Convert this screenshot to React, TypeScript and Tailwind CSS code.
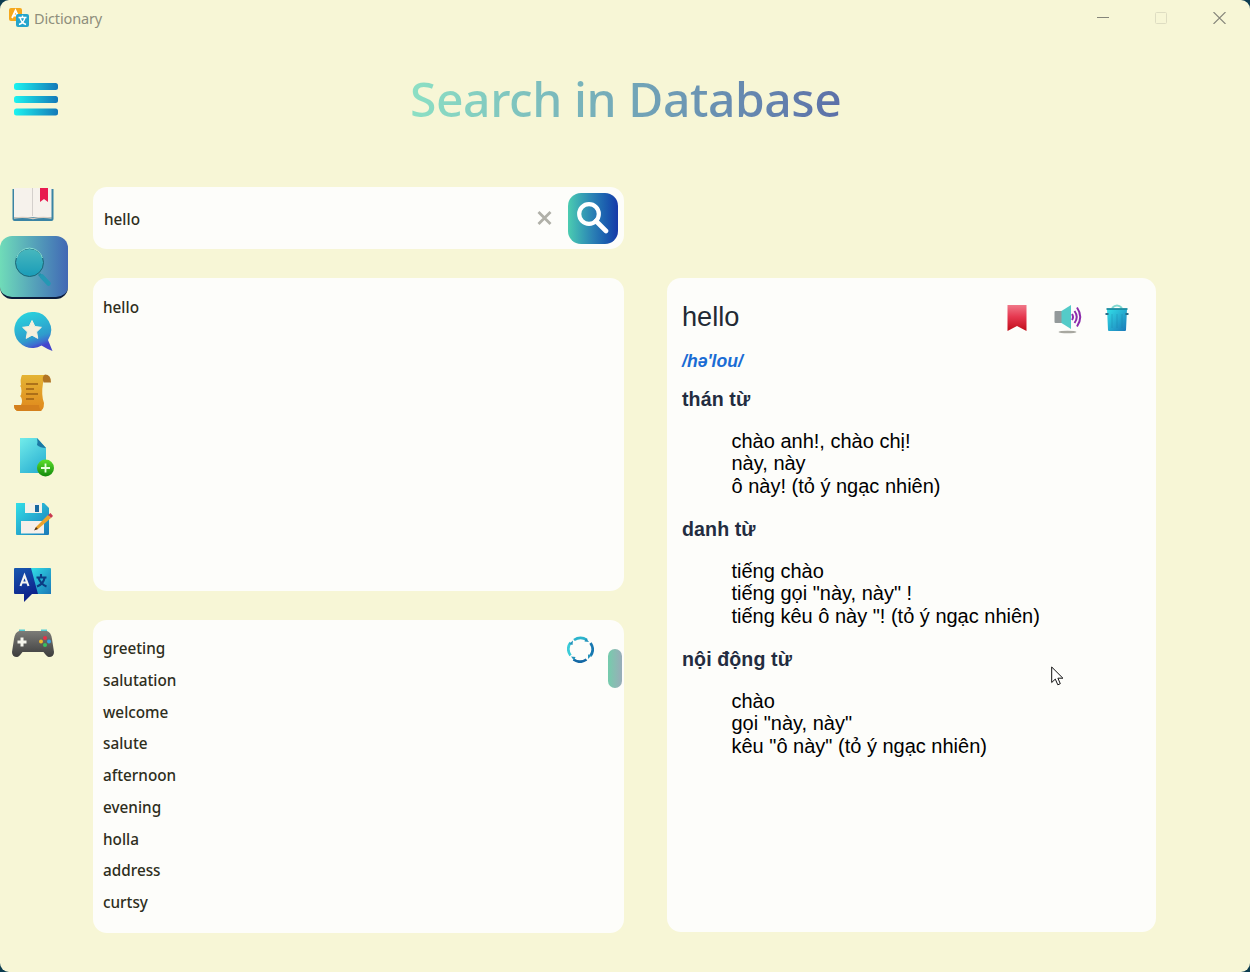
import React from "react";

type Part = { title: string; lines: string[] };

const synonyms = ["greeting", "salutation", "welcome", "salute", "afternoon", "evening", "holla", "address", "curtsy"];

const parts: Part[] = [
  { title: "thán từ", lines: ["chào anh!, chào chị!", "này, này", "ô này! (tỏ ý ngạc nhiên)"] },
  { title: "danh từ", lines: ["tiếng chào", 'tiếng gọi "này, này" !', 'tiếng kêu ô này "! (tỏ ý ngạc nhiên)'] },
  { title: "nội động từ", lines: ["chào", 'gọi "này, này"', 'kêu "ô này" (tỏ ý ngạc nhiên)'] },
];

function Gradients() {
  return (
    <svg width="0" height="0" className="absolute">
      <defs>
        <linearGradient id="cyanBlue" x1="0" y1="0" x2="1" y2="1">
          <stop offset="0" stopColor="#32e0e8" />
          <stop offset="1" stopColor="#1a78b8" />
        </linearGradient>
        <linearGradient id="paleCyan" x1="0" y1="0" x2="0.6" y2="1">
          <stop offset="0" stopColor="#72ecea" />
          <stop offset="1" stopColor="#2fb4d4" />
        </linearGradient>
        <linearGradient id="lens" x1="0" y1="0" x2="0" y2="1">
          <stop offset="0" stopColor="#48b8be" />
          <stop offset="1" stopColor="#1a9cb8" />
        </linearGradient>
        <linearGradient id="bubble" x1="0" y1="0" x2="0.35" y2="1">
          <stop offset="0" stopColor="#28dce0" />
          <stop offset="0.75" stopColor="#2f9ccc" />
          <stop offset="0.9" stopColor="#3c70d0" />
          <stop offset="1" stopColor="#4444cc" />
        </linearGradient>
        <linearGradient id="gold" x1="0" y1="0" x2="0" y2="1">
          <stop offset="0" stopColor="#e4b434" />
          <stop offset="1" stopColor="#e0881c" />
        </linearGradient>
        <linearGradient id="green" x1="0" y1="0" x2="0" y2="1">
          <stop offset="0" stopColor="#5ce02c" />
          <stop offset="1" stopColor="#12880c" />
        </linearGradient>
        <linearGradient id="navy" x1="0" y1="0" x2="0.3" y2="1">
          <stop offset="0" stopColor="#1858b0" />
          <stop offset="1" stopColor="#0c1e88" />
        </linearGradient>
        <linearGradient id="pad" x1="0" y1="0" x2="0" y2="1">
          <stop offset="0" stopColor="#7c7c78" />
          <stop offset="1" stopColor="#3c3c3c" />
        </linearGradient>
        <linearGradient id="red" x1="0" y1="0" x2="0" y2="1">
          <stop offset="0" stopColor="#f07888" />
          <stop offset="0.45" stopColor="#e63850" />
          <stop offset="1" stopColor="#c00c18" />
        </linearGradient>
        <linearGradient id="bars" x1="0" y1="0" x2="1" y2="0">
          <stop offset="0" stopColor="#1cf4f0" />
          <stop offset="1" stopColor="#1478b8" />
        </linearGradient>
      </defs>
    </svg>
  );
}

function AppLogo() {
  return (
    <svg width="20" height="20" viewBox="0 0 20 20">
      <rect x="0" y="0" width="13" height="13" rx="2" fill="#f5a81c" />
      <path d="M3 10 6.5 2.5 10 10M4.500 7.500h4" fill="none" stroke="#fff" strokeWidth="1.800" />
      <rect x="7" y="6" width="13" height="13" rx="2" fill="#25a5cc" />
      <path d="M9.500 9.500h8M13.500 7.500v2M16 9.500c-1 4-3 6-6 7M11 9.500c1 4 3 6 6 7" fill="none" stroke="#fff" strokeWidth="1.400" />
    </svg>
  );
}

function MenuIcon() {
  return (
    <svg width="44" height="34" viewBox="0 0 44 34">
      <rect y="1" width="44" height="7" rx="2.500" fill="url(#bars)" />
      <rect y="14" width="44" height="7" rx="2.500" fill="url(#bars)" />
      <rect y="26.500" width="44" height="7" rx="2.500" fill="url(#bars)" />
    </svg>
  );
}

function BookIcon() {
  return (
    <svg width="42" height="33" viewBox="0 0 42 33">
      <path d="M.500 1h41v30q0 2-2 2h-37q-2 0-2-2z" fill="#3a84a4" />
      <path d="M2 0h19v29H2zM21 0h18.500v29H21z" fill="#f6f2ec" />
      <path d="M2 30q10-1.500 19 .5 9-2 18.500-.5" fill="none" stroke="#d8ccc0" strokeWidth="1.400" />
      <path d="M20.500 0v28" stroke="#d4d0cc" strokeWidth="1" />
      <path d="M28 0h8v14l-4-3-4 3z" fill="#e81c50" />
    </svg>
  );
}

function SearchIcon() {
  return (
    <svg width="38" height="40" viewBox="0 0 38 40">
      <path d="M25 27l3 3" stroke="#2090a8" strokeWidth="3" />
      <path d="M28 29.500l6.500 7" stroke="#2498b4" strokeWidth="4.500" strokeLinecap="round" />
      <circle cx="15.500" cy="15.500" r="14" fill="url(#lens)" stroke="#1c6474" strokeWidth="1" />
      <path d="M2.500 11a13.500 13.500 0 0 1 26 0" fill="none" stroke="#8ce4d8" strokeWidth="1" />
    </svg>
  );
}

function StarIcon() {
  return (
    <svg width="39" height="39" viewBox="0 0 39 39">
      <path d="M18 0a18 18 0 1 0 9.500 33.500Q33 37 38.500 39q-2-5-4.500-11A18 18 0 0 0 18 0z" fill="url(#bubble)" />
      <path d="M18 8.500l2.900 6 6.500.8-4.800 4.600 1.200 6.500-5.800-3.200-5.800 3.200 1.200-6.500-4.800-4.600 6.500-.8z" fill="#f6f0dc" stroke="#f6f0dc" strokeWidth="1" strokeLinejoin="round" />
    </svg>
  );
}

function ScrollIcon() {
  return (
    <svg width="38" height="38" viewBox="0 0 38 38">
      <path d="M8 1h24q-3 2-3 8-2 12 1 20 0 8-5 8H5q-5 0-5-6h7q2-4 0-8l-1-1 1-1q1-4 0-8l-1-1 1-1q-1-6 1-10z" fill="url(#gold)" />
      <path d="M31 .5q6 0 6 8h-7.500q-2-6 1.500-8z" fill="#b07424" />
      <path d="M0 31h25q0 4 3 6H5q-5 0-5-6z" fill="#d4801c" />
      <path d="M12 10h12M12 15h8M12 20h12M12 25h8" stroke="#9c6014" strokeWidth="1.700" />
    </svg>
  );
}

function AddFileIcon() {
  return (
    <svg width="36" height="40" viewBox="0 0 36 40">
      <path d="M1 1h17l9 10v25H1z" fill="url(#paleCyan)" />
      <path d="M18 1l9 10q-6 0-9-3 1-3 0-7z" fill="#1c78a4" />
      <circle cx="26.500" cy="31" r="8.500" fill="url(#green)" />
      <path d="M26.500 26.500v9M22 31h9" stroke="#e8ffe0" strokeWidth="1.800" />
    </svg>
  );
}

function SaveIcon() {
  return (
    <svg width="38" height="34" viewBox="0 0 38 34">
      <path d="M1 1h28l5 5v26q0 1-1 1H2q-1 0-1-1z" fill="url(#cyanBlue)" />
      <path d="M10 1h17v10H10z" fill="#f2f2ea" />
      <path d="M20 3h4v7h-4z" fill="#1868a0" />
      <path d="M6 19h23v12.500H6z" fill="#f6f0ea" />
      <path d="M33 13l3 3-13 11-3 1 1-3z" fill="#eca32c" />
      <path d="M21 25l-2 3.500 4-1.500z" fill="#54300e" />
      <path d="M33 13l2.500-2 2.500 3-2 2z" fill="#c83850" />
    </svg>
  );
}

function TranslateIcon() {
  return (
    <svg width="38" height="36" viewBox="0 0 38 36">
      <path d="M16 1h20q1 0 1 1v25H21z" fill="url(#cyanBlue)" />
      <path d="M1 1h16l7 26h-6l-8 8v-8H1q-1 0-1-1V2q0-1 1-1z" fill="url(#navy)" />
      <path d="M6.500 19l4-10.500 4 10.500M8 15.500h5" fill="none" stroke="#f4f4f0" strokeWidth="2.100" />
      <path d="M22.500 10.500h10M27 7v3.500M30.500 11q-1 6-7.500 8.500M24.500 11q2 6 8 8.500" fill="none" stroke="#0c3c84" strokeWidth="2.100" />
    </svg>
  );
}

function GameIcon() {
  return (
    <svg width="42" height="30" viewBox="0 0 42 30">
      <path d="M7 .500h6v3H7zM29 .500h6v3h-6z" fill="#55ccd4" />
      <path d="M7 2h28q4 1 5 8l2 13q0 5-5 5-2 0-5.500-5h-21Q7 28 5 28q-5 0-5-5l2-13q1-7 5-8z" fill="url(#pad)" />
      <path d="M10 8.500v9M5.500 13h9" stroke="#f4f4ec" strokeWidth="3" />
      <circle cx="33" cy="9" r="2" fill="#e83048" />
      <circle cx="29" cy="12.500" r="2" fill="#f0b82c" />
      <circle cx="37" cy="12.500" r="2" fill="#38a0e0" />
      <circle cx="33" cy="16" r="2" fill="#38c060" />
    </svg>
  );
}

function TitleBar() {
  return (
    <header className="flex h-9 shrink-0 items-center justify-between pr-6 pl-[9px]">
      <div className="flex items-center gap-[5px]">
        <AppLogo />
        <span className="pt-px font-['Noto_Sans','Open_Sans',sans-serif] text-[14.500px] tracking-[-0.15px] text-[#8e8e7c]">
          Dictionary
        </span>
      </div>
      <div className="flex items-center gap-[46px]">
        <svg width="12" height="12"><path d="M0 5.500h12" stroke="#85857a" /></svg>
        <svg width="12" height="12"><rect x="0.500" y="0.500" width="11" height="11" rx="1" fill="none" stroke="#deddc2" /></svg>
        <svg width="13" height="12"><path d="M.500 0l12 12M12.500 0l-12 12" stroke="#85857a" strokeWidth="1.100" /></svg>
      </div>
    </header>
  );
}

function Sidebar() {
  return (
    <nav className="flex w-[68px] shrink-0 flex-col">
      <button className="flex h-[49px] items-start justify-center pt-px pr-0.5"><BookIcon /></button>
      <button className="flex h-[63px] items-center justify-center rounded-xl border-b-2 border-[#0b1c3c] bg-linear-to-r from-[#70dcb8] to-[#4268b4] pr-0.5"><SearchIcon /></button>
      <button className="flex h-[63px] items-center justify-center pt-0.5 pr-px"><StarIcon /></button>
      <button className="flex h-[63px] items-center justify-center pr-0.5 pb-0.5"><ScrollIcon /></button>
      <button className="flex h-[63px] items-center justify-center pt-px pl-1.5"><AddFileIcon /></button>
      <button className="flex h-[63px] items-center justify-center pb-0.5"><SaveIcon /></button>
      <button className="flex h-[63px] items-center justify-center pt-1 pr-0.5"><TranslateIcon /></button>
      <button className="flex h-[63px] items-center justify-center pr-0.5 pb-1"><GameIcon /></button>
    </nav>
  );
}

function SearchBar() {
  return (
    <div className="flex h-[62px] items-center rounded-[14px] bg-[#fdfdfa] pr-1.5 pl-[11px]">
      <span className="flex-1 pt-0.5 text-[#2e2e1c]">hello</span>
      <svg className="mr-4" width="15" height="14" viewBox="0 0 15 14">
        <path d="M1.500 1l12 12M13.500 1l-12 12" stroke="#b0b0a8" strokeWidth="2.800" />
      </svg>
      <button className="flex h-[51px] w-[50px] items-center justify-center rounded-[13px] bg-linear-to-r from-[#4cccb0] via-[#2b80b4] to-[#1838a8]">
        <svg width="32" height="32" viewBox="0 0 32 32">
          <circle cx="12" cy="12" r="9.800" fill="none" stroke="#fff" strokeWidth="4.200" />
          <path d="M19 19l10 10" stroke="#fff" strokeWidth="4.600" strokeLinecap="round" />
        </svg>
      </button>
    </div>
  );
}

function Spinner() {
  return (
    <svg width="27" height="27" viewBox="0 0 27 27" fill="none" strokeWidth="2.700">
      <path d="M7 4a11.500 11.500 0 0 1 13 0" stroke="#2cb4cc" />
      <path d="M23.500 7a11.500 11.500 0 0 1 0 13" stroke="#1878b0" />
      <path d="M19.500 23.500a11.500 11.500 0 0 1-13 0" stroke="#1468a4" />
      <path d="M3.500 19.500a11.500 11.500 0 0 1 0-13" stroke="#3cccd8" />
      <path d="M19 2l3 4-4.500-.5zM25 19l-4 4v-4.500zM7 24.500l-3-4 4.500.5zM2 8l4-3.500-.5 4.500z" fill="#2494bc" />
    </svg>
  );
}

function WordActions() {
  return (
    <div className="flex items-start">
      <svg width="20" height="28" viewBox="0 0 20 28">
        <path d="M.500 1h19v26L10 22 .500 27z" fill="url(#red)" />
      </svg>
      <svg className="ml-[27px]" width="28" height="30" viewBox="0 0 28 30">
        <ellipse cx="13.500" cy="28" rx="9" ry="1.300" fill="#a8a8a0" />
        <path d="M.500 8q0-1 1-1H8v12H1.500q-1 0-1-1z" fill="#93999a" />
        <path d="M7.500 7L17 1v24l-9.500-6z" fill="#54cbc8" />
        <path d="M18 10q2 3 0 6M20.500 7q4.500 6 0 12M23 3.500q6.500 9.500 0 19" fill="none" stroke="#8c2cac" strokeWidth="2" />
      </svg>
      <svg className="ml-[23px]" width="24" height="28" viewBox="0 0 24 28">
        <path d="M7 4q5-5 10 0" fill="none" stroke="#80d8d0" strokeWidth="2" />
        <path d="M2 5h20l-1 21q0 1-1 1H4q-1 0-1-1z" fill="url(#cyanBlue)" />
        <path d="M1.500 5h21" stroke="#1a8ca0" strokeWidth="1.800" />
        <path d="M.500 10h3M20.500 10h3" stroke="#2a6c88" strokeWidth="1.800" />
        <path d="M7 10v14M12 10v14M17 10v14" stroke="#1a78a0" strokeOpacity=".35" />
      </svg>
    </div>
  );
}

function Definition() {
  return (
    <article className="mt-[91px] h-[654px] w-[489px] rounded-[14px] bg-[#fdfdfa] pt-[23px] pr-[27px] pl-[15px] font-['Liberation_Sans',sans-serif]">
      <div className="flex h-8 justify-between">
        <h2 className="text-[27.200px] leading-8 text-[#222a34]">hello</h2>
        <div className="pt-[3px]"><WordActions /></div>
      </div>
      <p className="mt-[18px] text-[17.600px] leading-5 font-bold text-[#1a6cd4] italic">/hə'lou/</p>
      <div className="flex flex-col gap-5 pt-[17px]">
        {parts.map((part) => (
          <section key={part.title} className="flex flex-col text-[19.600px] leading-[22.500px]">
            <h3 className="tracking-[0.1px] text-[#232c40] font-bold">{part.title}</h3>
            <div className="mt-[19px] mb-px pl-[49.500px] text-[20px] text-black">
              {part.lines.map((line) => <p key={line}>{line}</p>)}
            </div>
          </section>
        ))}
      </div>
    </article>
  );
}

export default function App() {
  return (
    <div className="h-[972px] w-[1250px] overflow-hidden bg-[#0c3c50]">
      <Gradients />
      <div className="relative flex h-full flex-col rounded-[9px] bg-[#f7f6d6]">
        <TitleBar />
        <div className="flex h-[151px] shrink-0 items-start">
          <button className="mt-[46px] ml-3.5 w-11"><MenuIcon /></button>
          <h1 className="mt-[29px] ml-[352px] bg-linear-to-r from-[#8ce0c4] to-[#5c70a8] bg-clip-text font-['Noto_Sans','Open_Sans',sans-serif] text-[48px] leading-[68px] font-medium tracking-[-0.42px] whitespace-nowrap text-transparent">
            Search in Database
          </h1>
        </div>
        <main className="flex items-start font-['Noto_Sans','Open_Sans',sans-serif] text-[15.300px] font-medium">
          <Sidebar />
          <div className="ml-[25px] flex w-[531px] flex-col gap-[29px]">
            <SearchBar />
            <div className="h-[313px] rounded-[14px] bg-[#fdfdfa] px-2.5 pt-[13px] leading-8 text-[#2e2e1c]">hello</div>
            <div className="flex h-[313px] items-start rounded-[14px] bg-[#fdfdfa] pt-[13px] pr-0.5 pl-2.5">
              <ul className="flex-1 leading-[31.750px] text-[#2e2e1c]">
                {synonyms.map((word) => <li key={word}>{word}</li>)}
              </ul>
              <div className="mt-[3px]"><Spinner /></div>
              <div className="mt-4 ml-3.5 h-[39px] w-3.5 rounded-[7px] bg-linear-to-r from-[#74ccac] to-[#98acb8]" />
            </div>
          </div>
          <div className="ml-[43px]"><Definition /></div>
        </main>
        <svg className="absolute top-[666px] left-[1051px]" width="13" height="20" viewBox="0 0 13 20">
          <path d="M.700 1v15.500l3.600-3.400 2.500 5.700 2.500-1.100-2.400-5.500h5z" fill="#fff" stroke="#111" />
        </svg>
      </div>
    </div>
  );
}
